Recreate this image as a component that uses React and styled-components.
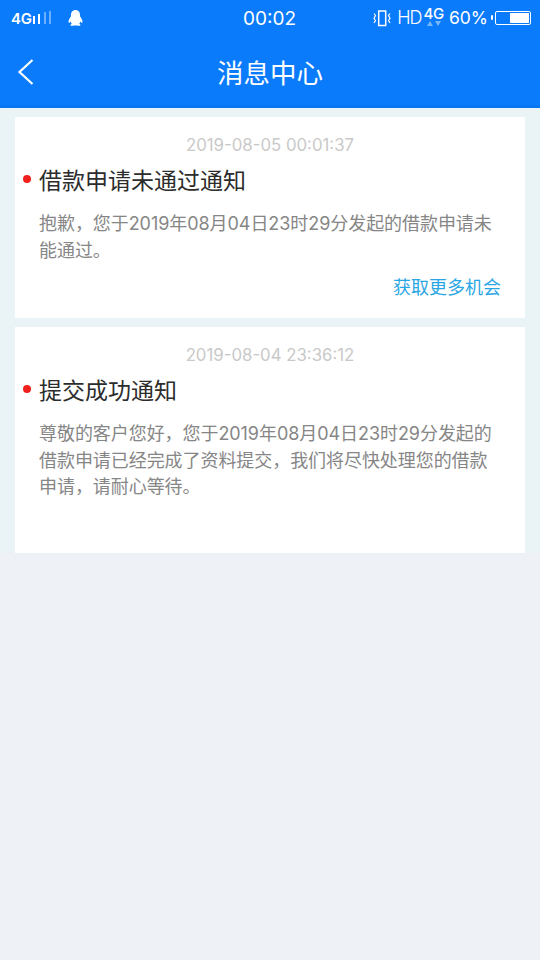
import React from 'react';
import styled, { createGlobalStyle } from 'styled-components';

const Global = createGlobalStyle`
  html, body { margin: 0; padding: 0; background: #eef1f5; }
  * { box-sizing: border-box; }
  body { font-family: "Inter", "Noto Sans CJK SC", sans-serif; }
`;
const Page = styled.div`
  width: 540px; height: 960px; background: #eef1f5; overflow: hidden;
  display: flex; flex-direction: column;
`;
const Header = styled.header`
  background: #0a7bfb; height: 108px; color: #fff; flex: none;
  border-bottom: 3px solid #0875f2;
`;
const StatusBar = styled.div`
  height: 36px; display: grid; grid-template-columns: 1fr auto 1fr; align-items: center;
  padding: 0 9px 0 11px;
`;
const StatusLeft = styled.div`display: flex; align-items: center; gap: 15px;`;
const SignalGroup = styled.span`display: flex; align-items: center; gap: 1px;`;
const StatusRight = styled.div`display: flex; align-items: center; justify-content: flex-end;`;
const NetLabel = styled.span`
  font: 600 15px/1 "Inter", sans-serif; letter-spacing: -0.3px;
`;
const Clock = styled.span`
  font: 400 19px/1 "Inter", sans-serif; margin-left: -3px;
`;
const Hd = styled.span`
  font: 300 18px/1 "Inter", sans-serif; letter-spacing: -1px; margin-left: 5px;
`;
const FourG = styled.span`
  display: flex; flex-direction: column; align-items: center; margin: -4px 0 0 2px;
  font: 500 15px/1 "Inter", sans-serif; letter-spacing: -0.3px;
`;
const Percent = styled.span`
  font: 400 17.500px/1 "Inter", sans-serif; margin-left: 5px; margin-right: 7px;
`;
const Battery = styled.span`
  position: relative; width: 36px; height: 14px; border: 1.500px solid #fff; border-radius: 2px;
  display: flex; justify-content: flex-end; padding: 1px;
  &::before { content: ""; position: absolute; left: -5px; top: 3px; width: 2px; height: 5px; background: #fff; border-radius: 1px; }
`;
const BatteryFill = styled.span`width: 60%; background: #fff;`;
const NavBar = styled.div`
  height: 72px; display: grid; grid-template-columns: 72px 1fr 72px; align-items: center;
`;
const BackButton = styled.div`display: flex; padding-left: 17px; align-items: center;`;
const Title = styled.h1`
  margin: 0; text-align: center; font: 400 26.500px/1 "Noto Sans CJK SC", sans-serif;
`;
const List = styled.main`
  display: flex; flex-direction: column; gap: 9px; padding: 9px 15px 0;
  background: #eaf3f6;
`;
const Card = styled.article`
  background: #fff; padding: 17px 24px 0; height: ${p => p.$h}px;
  display: flex; flex-direction: column;
`;
const Time = styled.time`
  text-align: center; color: #c9c9c9; font: 400 16.800px/20px "Inter", sans-serif; transform: translateY(1px);
`;
const CardTitle = styled.h2`
  position: relative; margin: 10px 0 0; color: #2c2c2c; font: 400 23px/30px "Noto Sans CJK SC", sans-serif;
  &::before { content: ""; position: absolute; left: -16px; top: 11px; width: 8px; height: 8px; border-radius: 50%; background: #f0201c; }
`;
const Body = styled.p`
  margin: 17px 0 0; color: #868686; font: 400 18px/26.500px "Inter", "Noto Sans CJK SC", sans-serif;
  letter-spacing: -0.06px; width: 456px;
`;
const Action = styled.a`
  align-self: flex-end; margin: 9px 0 0; color: #2ba6e4; font: 400 18px/27px "Noto Sans CJK SC", sans-serif;
`;

const Signal = () => (
  <svg width="20" height="14" viewBox="0 0 20 14">
    <rect x="0" y="5" width="2" height="8" fill="#fff" />
    <rect x="5" y="3" width="2" height="10" fill="#fff" />
    <rect x="11" y="1" width="2" height="12" fill="#fff" opacity=".4" />
    <rect x="16" y="0" width="2" height="13" fill="#fff" opacity=".4" />
  </svg>
);
const Penguin = () => (
  <svg width="15" height="17" viewBox="0 0 15 17">
    <path d="M7.500 0C4.400 0 3 2.400 3 5c0 .8 0 1.200-.3 1.700C1.600 8.300.5 10 .5 11.800c0 1 .5 1.300 1.200.6l.8-1c.2 1 .7 1.800 1.300 2.400-1 .5-1.500 1-1.300 1.500.3.7 2.200.7 3.500.3.5-.2 1-.2 1.500-.2s1 0 1.500.2c1.300.4 3.200.4 3.500-.3.2-.5-.3-1-1.300-1.500.6-.6 1.100-1.400 1.300-2.400l.8 1c.7.7 1.200.4 1.200-.6 0-1.800-1.100-3.500-2.200-5.100-.3-.5-.3-.9-.3-1.700 0-2.600-1.400-5-4.500-5z" fill="#fff" />
  </svg>
);
const Vibrate = () => (
  <svg width="20" height="17" viewBox="0 0 20 17" fill="none" stroke="#fff">
    <rect x="6.700" y="1" width="7" height="14.500" strokeWidth="1.500" />
    <path d="M2 3.500l1.500 2-1.500 3 1.500 2-1.500 2.500M18 3.500l-1.500 2 1.500 3-1.500 2 1.500 2.500" strokeWidth="1.200" />
  </svg>
);
const Chevron = () => (
  <svg width="18" height="28" viewBox="0 0 18 28" fill="none" stroke="#fff" strokeWidth="2.200">
    <path d="M15.500 2L2.500 14l13 12" />
  </svg>
);
const Arrows = () => (
  <svg width="16" height="5" viewBox="0 0 16 5" fill="#fff" opacity=".45">
    <path d="M4 0l3 5H1zM12 5l3-5H9z" />
  </svg>
);

export default function App() {
  return (
    <Page>
      <Global />
      <Header>
        <StatusBar>
          <StatusLeft>
            <SignalGroup><NetLabel>4G</NetLabel><Signal /></SignalGroup>
            <Penguin />
          </StatusLeft>
          <Clock>00:02</Clock>
          <StatusRight>
            <Vibrate />
            <Hd>HD</Hd>
            <FourG>4G<Arrows /></FourG>
            <Percent>60%</Percent>
            <Battery><BatteryFill /></Battery>
          </StatusRight>
        </StatusBar>
        <NavBar>
          <BackButton><Chevron /></BackButton>
          <Title>消息中心</Title>
        </NavBar>
      </Header>
      <List>
        <Card $h={201}>
          <Time>2019-08-05 00:01:37</Time>
          <CardTitle>借款申请未通过通知</CardTitle>
          <Body>抱歉，您于2019年08月04日23时29分发起的借款申请未能通过。</Body>
          <Action>获取更多机会</Action>
        </Card>
        <Card $h={226}>
          <Time>2019-08-04 23:36:12</Time>
          <CardTitle>提交成功通知</CardTitle>
          <Body>尊敬的客户您好，您于2019年08月04日23时29分发起的借款申请已经完成了资料提交，我们将尽快处理您的借款申请，请耐心等待。</Body>
        </Card>
      </List>
    </Page>
  );
}
